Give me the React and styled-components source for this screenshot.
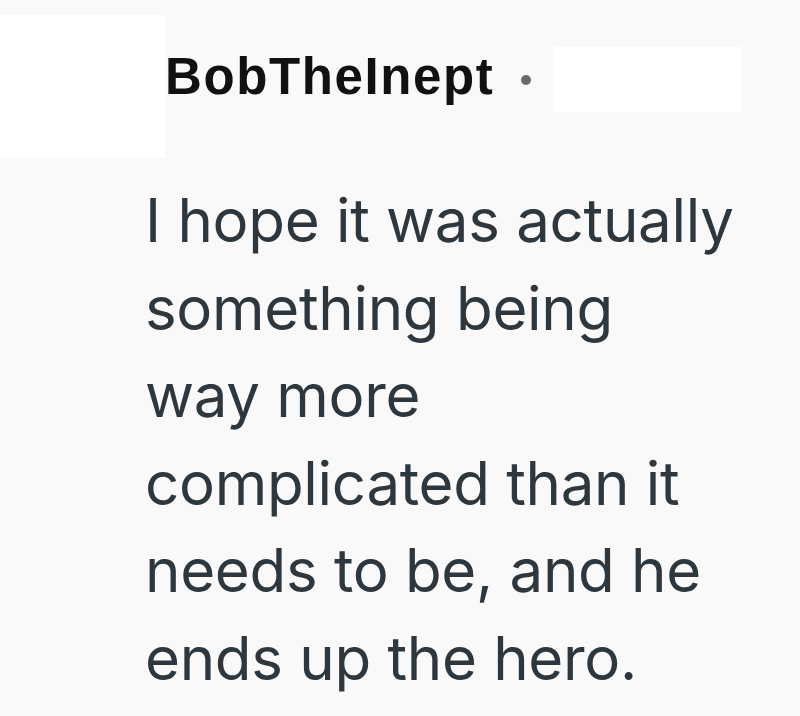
import React from 'react'
import styled, { createGlobalStyle } from 'styled-components'

const GlobalStyle = createGlobalStyle`
  html, body {
    margin: 0;
    padding: 0;
    background: #f9f9f9;
  }
  body {
    width: 800px;
    height: 716px;
    overflow: hidden;
  }
`

const Comment = styled.article`
  padding-top: 15px;
`

const Header = styled.header`
  display: flex;
  align-items: flex-start;
`

// redacted avatar
const Avatar = styled.div`
  width: 165px;
  height: 143px;
  background: #ffffff;
  flex-shrink: 0;
`

const Meta = styled.div`
  display: flex;
  align-items: flex-start;
  margin-top: 32px;
`

const Author = styled.span`
  margin-top: 5px;
  font-family: 'Liberation Sans', Arial, sans-serif;
  font-weight: 700;
  font-size: 51px;
  line-height: 50px;
  letter-spacing: 1.6px;
  color: #111111;
`

const Dot = styled.span`
  width: 10px;
  height: 10px;
  border-radius: 50%;
  background: #6a6a6a;
  margin: 28px 22px 0 27px;
`

// redacted timestamp
const Stamp = styled.div`
  width: 189px;
  height: 65px;
  background: #ffffff;
`

const Body = styled.p`
  margin: 19px 0 0;
  padding-left: 145px;
  font-family: Inter, 'Noto Sans', sans-serif;
  font-size: 60px;
  line-height: 87.6px;
  letter-spacing: -0.3px;
  color: #2d373d;
`

export default function App() {
  return (
    <>
      <GlobalStyle />
      <Comment>
        <Header>
          <Avatar />
          <Meta>
            <Author>BobTheInept</Author>
            <Dot />
            <Stamp />
          </Meta>
        </Header>
        <Body>
          I hope it was actually<br />
          something being<br />
          way more<br />
          complicated than it<br />
          needs to be, and he<br />
          ends up the hero.
        </Body>
      </Comment>
    </>
  )
}
